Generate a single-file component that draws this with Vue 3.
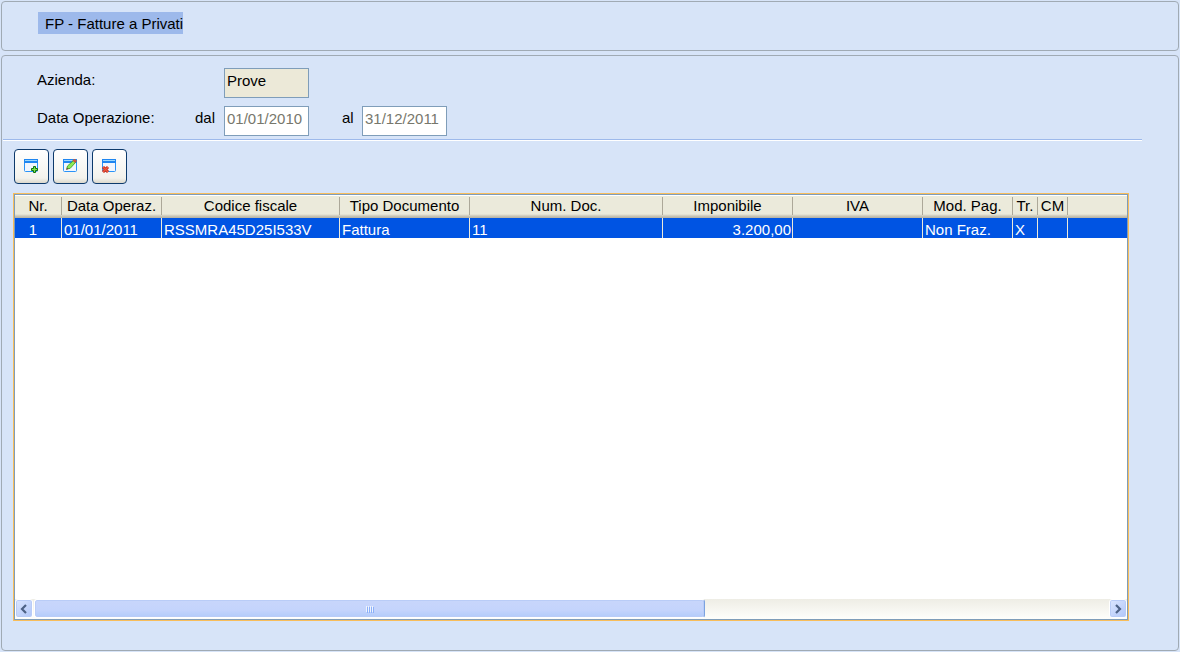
<script setup>
import { ref } from 'vue'

const company = ref('Prove')
const from = ref('01/01/2010')
const to = ref('31/12/2011')

const columns = [
  { key: 'nr', label: 'Nr.', cls: 'c-nr' },
  { key: 'date', label: 'Data Operaz.', cls: 'c-date' },
  { key: 'cf', label: 'Codice fiscale', cls: 'c-cf' },
  { key: 'type', label: 'Tipo Documento', cls: 'c-type' },
  { key: 'num', label: 'Num. Doc.', cls: 'c-num' },
  { key: 'amount', label: 'Imponibile', cls: 'c-amount' },
  { key: 'vat', label: 'IVA', cls: 'c-vat' },
  { key: 'pay', label: 'Mod. Pag.', cls: 'c-pay' },
  { key: 'tr', label: 'Tr.', cls: 'c-tr' },
  { key: 'cm', label: 'CM', cls: 'c-cm' },
  { key: 'rest', label: '', cls: 'c-rest' }
]

const rows = [
  {
    nr: '1',
    date: '01/01/2011',
    cf: 'RSSMRA45D25I533V',
    type: 'Fattura',
    num: '11',
    amount: '3.200,00',
    vat: '',
    pay: 'Non Fraz.',
    tr: 'X',
    cm: '',
    rest: ''
  }
]
</script>

<template>
  <div class="page">
    <header class="panel title-panel">
      <h1 class="title">FP - Fatture a Privati</h1>
    </header>

    <main class="panel main-panel">
      <form class="filters" @submit.prevent>
        <div class="line">
          <label class="name" for="company">Azienda:</label>
          <input id="company" v-model="company" class="field company" type="text" readonly>
        </div>
        <div class="line">
          <span class="name">Data Operazione:</span>
          <label class="dal" for="from">dal</label>
          <input id="from" v-model="from" class="field" type="text">
          <label class="al" for="to">al</label>
          <input id="to" v-model="to" class="field" type="text">
        </div>
      </form>

      <hr class="rule">

      <div class="toolbar">
        <button class="tool" type="button" aria-label="Nuovo">
          <svg width="17" height="17" viewBox="0 0 17 17">
            <rect x="1.5" y="1.5" width="13" height="12" rx="1" fill="#f1f6fe" stroke="#2a93f8" />
            <path d="M1 1h14v4H1z" fill="#1f86f0" />
            <path d="M2 2.500h12" stroke="#9ad8ff" />
            <path d="M10.500 8.500h2v2h2v2h-2v2h-2v-2h-2v-2h2z" fill="#7be84a" stroke="#0c7010" />
          </svg>
        </button>
        <button class="tool" type="button" aria-label="Modifica">
          <svg width="17" height="17" viewBox="0 0 17 17">
            <rect x="1.5" y="1.5" width="13" height="12" rx="1" fill="#f1f6fe" stroke="#2a93f8" />
            <path d="M1 1h14v4H1z" fill="#1f86f0" />
            <path d="M2 2.500h12" stroke="#9ad8ff" />
            <path d="M5 10.500l.5-2.500 6-5.500 2 2-5.500 6z" fill="#8cea55" stroke="#4aa832" />
            <path d="M11 2.500l1.500-1.500 2 2-1.500 1.500z" fill="#e8503c" stroke="#b8583c" />
            <path d="M4 12l.8-2.500 1.700 1.700z" fill="#6a4a2a" />
          </svg>
        </button>
        <button class="tool" type="button" aria-label="Elimina">
          <svg width="17" height="17" viewBox="0 0 17 17">
            <rect x="1.5" y="1.5" width="13" height="12" rx="1" fill="#f1f6fe" stroke="#2a93f8" />
            <path d="M1 1h14v4H1z" fill="#1f86f0" />
            <path d="M2 2.500h12" stroke="#9ad8ff" />
            <path d="M2 9l5 5m0-5l-5 5" stroke="#c02a1c" stroke-width="3" />
            <path d="M2 9l5 5m0-5l-5 5" stroke="#f05a3c" stroke-width="1.200" />
          </svg>
        </button>
      </div>

      <section class="grid-box">
        <div class="grid-frame">
          <div class="grid-view">
            <table class="grid">
              <colgroup>
                <col v-for="c in columns" :key="c.key" :class="c.cls">
              </colgroup>
              <thead>
                <tr>
                  <th v-for="c in columns" :key="c.key" scope="col">
                    <span>{{ c.label }}</span>
                  </th>
                </tr>
              </thead>
              <tbody>
                <tr v-for="r in rows" :key="r.nr">
                  <td v-for="c in columns" :key="c.key" :class="c.key">{{ r[c.key] }}</td>
                </tr>
              </tbody>
            </table>
          </div>

          <div class="scrollbar">
            <button class="arrow" type="button" aria-label="Scorri a sinistra">
              <svg width="8" height="10" viewBox="0 0 8 10">
                <path d="M6 1L2 5l4 4" fill="none" stroke="#4d6185" stroke-width="2.200" />
              </svg>
            </button>
            <div class="track">
              <div class="thumb"><i /><i /><i /><i /></div>
            </div>
            <button class="arrow" type="button" aria-label="Scorri a destra">
              <svg width="8" height="10" viewBox="0 0 8 10">
                <path d="M2 1l4 4-4 4" fill="none" stroke="#4d6185" stroke-width="2.200" />
              </svg>
            </button>
          </div>
        </div>
      </section>
    </main>
  </div>
</template>

<style>
body {
  background: #d7e4f8;
}
</style>

<style scoped>
.page {
  box-sizing: border-box;
  min-height: 100vh;
  padding: 1px;
  display: flex;
  flex-direction: column;
  gap: 4px;
  background: #d7e4f8;
  color: #000;
  font: 15px/18px "Liberation Sans", Arial, sans-serif;
}

.panel {
  border: 1px solid #a0aab4;
  border-radius: 4px;
}

.title-panel {
  padding: 10px 36px 16px;
}

.title {
  display: inline-block;
  vertical-align: top;
  margin: 0;
  padding: 3px 0 1px 7px;
  background: #9db9eb;
  font-size: 15px;
  font-weight: 400;
  line-height: 18px;
  white-space: nowrap;
}

.main-panel {
  flex: 1;
  display: flex;
  flex-direction: column;
  padding: 12px 0 29px;
}

.filters {
  display: flex;
  flex-direction: column;
  gap: 8px;
  padding-left: 35px;
}

.line {
  display: flex;
  align-items: flex-start;
}

.line > label,
.line > span {
  padding-top: 3px;
}

.name {
  width: 158px;
}

.line:first-child .name {
  width: 187px;
}

.dal {
  width: 29px;
}

.al {
  width: 20px;
  margin-left: 33px;
}

.field {
  box-sizing: border-box;
  width: 85px;
  height: 30px;
  padding: 0 2px 5px;
  border: 1px solid #7f9db9;
  border-radius: 0;
  background: #fff;
  color: #77776c;
  font: inherit;
}

.company {
  background: #ece9d8;
  color: #000;
}

.rule {
  width: auto;
  height: 1px;
  margin: 3px 36px 0 1px;
  border: 0;
  border-top: 1px solid #9db9eb;
  background: #fff;
}

.toolbar {
  display: flex;
  gap: 4px;
  padding: 8px 12px 9px;
}

.tool {
  width: 35px;
  height: 35px;
  padding: 0;
  display: grid;
  place-items: center;
  border: 1px solid #0d3a6c;
  border-radius: 4px;
  background: linear-gradient(#fff, #f3f2ec 85%, #dcd8cc);
}

.grid-box {
  flex: 1;
  display: flex;
  margin: 0 49px 0 11px;
  border: 1px solid #f8bd5a;
}

.grid-frame {
  flex: 1;
  min-width: 0;
  display: flex;
  flex-direction: column;
  border: 1px solid #7f9db9;
  background: #fff;
}

.grid-view {
  flex: 1;
}

.grid {
  width: 100%;
  table-layout: fixed;
  border-collapse: separate;
  border-spacing: 0;
}

.c-nr { width: 47px; }
.c-date { width: 100px; }
.c-cf { width: 178px; }
.c-type,
.c-amount,
.c-vat { width: 130px; }
.c-num { width: 193px; }
.c-pay { width: 90px; }
.c-tr { width: 25px; }
.c-cm { width: 30px; }

th {
  height: 23px;
  padding: 1px 0 3px;
  box-sizing: border-box;
  background: linear-gradient(#fff 1px, #ebeadb 1px, #ebeadb 19px, #cbc7b8 21px, #b5b2a2 23px);
  font-weight: 400;
  vertical-align: top;
}

th span {
  display: block;
  height: 18px;
  margin-top: 1px;
  border-right: 1px solid #aca899;
  line-height: 18px;
  white-space: nowrap;
}

th:last-child span {
  border-right: 0;
}

td {
  height: 20px;
  box-sizing: border-box;
  padding: 4px 1px 0 2px;
  border-right: 1px solid #ece9d8;
  background: #0054e3;
  color: #fff;
  line-height: 16px;
  white-space: nowrap;
}

td:last-child {
  border-right: 0;
}

.nr {
  padding-right: 12px;
  text-align: center;
}

.amount {
  text-align: right;
}

.scrollbar {
  display: flex;
  gap: 1px;
  height: 19px;
  padding-bottom: 1px;
  background: linear-gradient(#eeede5, #fefefb);
}

.arrow {
  width: 18px;
  height: 19px;
  padding: 0;
  display: grid;
  place-items: center;
  border: 1px solid #fff;
  border-radius: 3px;
  background: linear-gradient(135deg, #dce6ff, #b0c6f8);
  box-shadow: inset 0 0 0 1px #b9ccf7;
}

.track {
  flex: 1;
}

.thumb {
  box-sizing: border-box;
  width: 62.5%;
  height: 19px;
  display: flex;
  align-items: center;
  justify-content: center;
  gap: 1px;
  border: 1px solid #fff;
  border-right-color: #7ba2e0;
  border-radius: 3px;
  background: linear-gradient(#c8d6fb, #c4d4fc 60%, #b2cbfa);
  box-shadow: inset 0 0 0 1px #b9ccf7;
}

.thumb i {
  width: 1px;
  height: 6px;
  background: #eef4fe;
  box-shadow: 1px 1px 0 #8cb0f8;
}
</style>
